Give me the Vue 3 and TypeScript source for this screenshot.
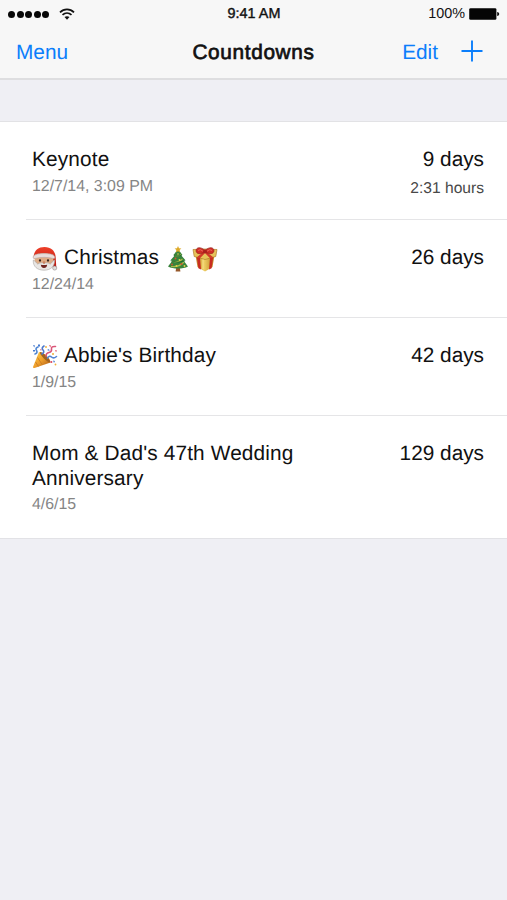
<script setup lang="ts">
type Emoji = 'santa' | 'tree' | 'gift' | 'party'

interface Countdown {
  title: string
  date: string
  days: string
  hours?: string
  before?: Emoji[]
  after?: Emoji[]
}

const countdowns: Countdown[] = [
  { title: 'Keynote', date: '12/7/14, 3:09 PM', days: '9 days', hours: '2:31 hours' },
  { title: 'Christmas', date: '12/24/14', days: '26 days', before: ['santa'], after: ['tree', 'gift'] },
  { title: "Abbie's Birthday", date: '1/9/15', days: '42 days', before: ['party'] },
  { title: "Mom & Dad's 47th Wedding Anniversary", date: '4/6/15', days: '129 days' },
]
</script>

<template>
  <svg class="defs" aria-hidden="true">
    <defs>
      <linearGradient id="g-red" x1="0" y1="0" x2="0" y2="1">
        <stop offset="0" stop-color="#ee402a" /><stop offset="1" stop-color="#b8140c" />
      </linearGradient>
      <linearGradient id="g-gold" x1="0" y1="0" x2="1" y2="0">
        <stop offset="0" stop-color="#b97d1d" /><stop offset=".45" stop-color="#efd065" /><stop offset="1" stop-color="#b97d1d" />
      </linearGradient>
      <linearGradient id="g-cone" x1="0" y1="0" x2="1" y2="1">
        <stop offset="0" stop-color="#ffd24a" /><stop offset=".5" stop-color="#ef9f2c" /><stop offset="1" stop-color="#a35213" />
      </linearGradient>
    </defs>
    <symbol id="santa" viewBox="0 0 26 26">
      <path d="M1.500 12C1.500 5 6 1 12.500 1c7 0 11 4.500 11.200 10.500l.6 10-3.500-1z" fill="url(#g-red)" />
      <ellipse cx="12" cy="15" rx="9.600" ry="8" fill="#dfad87" />
      <path d="M1.300 14c-.5 6.500 4 10.200 10.700 10.200S22.800 20.500 22.600 14c-2 .8-2.600 3-4.300 4.100-2-1.300-4.300-1.700-6.300-.9-2-.8-4.300-.4-6.300.9C4.200 17 3.300 14.800 1.300 14z" fill="#e9e7e5" stroke="#aaa5a1" stroke-width=".6" />
      <path d="M1.200 11.500C1 8.800 5 7.600 12 7.600s11 1.200 10.800 3.900c-.1 1.500-1.400 1.100-2.500.8-4.800-1.300-11.500-1.300-16.600 0-1.200.3-2.400.7-2.500-.8z" fill="#e9dedb" stroke="#bba7a2" stroke-width=".6" />
      <circle cx="8" cy="14.500" r="1.150" fill="#35241c" />
      <circle cx="16" cy="14.500" r="1.150" fill="#35241c" />
      <path d="M8.800 18.700q3.200.7 6.400 0-.5 3.300-3.200 3.300t-3.200-3.300z" fill="#6f2521" />
      <circle cx="12" cy="16.500" r="1.300" fill="#ca825f" />
      <circle cx="22.700" cy="22" r="2.100" fill="#dfdcda" stroke="#827b77" stroke-width=".5" />
    </symbol>
    <symbol id="tree" viewBox="0 0 26 26">
      <path d="M11.300 21h3.400l.7 4.500h-4.800z" fill="#96592b" />
      <path d="M13 3l4.500 6-1.400.3 4.400 5-1.800.5 4.300 5.700c-5 2.700-15 2.700-20 0l4.300-5.700-1.800-.5 4.400-5L8.500 9z" fill="#38833c" />
      <path d="M10 9.500q4 1.500 6-1M7.500 15.300q6 2 10-2.500M6 20.500q8 1 13-4.500" stroke="#a7ba48" stroke-width="1.200" fill="none" />
      <path d="M8.700 9.300q4 1.800 8 0M5.700 14.800q7 3 14.400 0" stroke="#176529" stroke-width=".8" fill="none" />
      <path d="M13 0l1 2.300 2.400.2-1.800 1.600.5 2.400-2.100-1.300-2.100 1.300.5-2.400L9.600 2.500l2.400-.2z" fill="#dda928" />
      <g fill="#ce5631"><circle cx="10.500" cy="12.500" r="1" /><circle cx="16.500" cy="18" r="1.100" /><circle cx="7" cy="18.500" r="1" /></g>
      <g fill="#e3d24b"><circle cx="14.500" cy="14" r=".9" /><circle cx="11.500" cy="20" r="1" /><circle cx="19.500" cy="20" r=".9" /><circle cx="13" cy="8" r=".8" /></g>
    </symbol>
    <symbol id="gift" viewBox="0 0 26 26">
      <path d="M3.500 9l9.500 4 9.500-4-2 12L13 25.500 5.500 21z" fill="url(#g-gold)" />
      <path d="M1 3.500L13 3l12 .5-1.200 7L13 13.500 2.200 10.500z" fill="#e6c35a" stroke="#a66e19" stroke-width=".6" />
      <path d="M4.800 11l3.200 1 1 11.500-2.600-1.300zM18 12l3.200-1-1.600 11.200-2.600 1.300z" fill="#c82c21" />
      <path d="M4.800 11.200L12 5.500l2 .5-6 6.300zM21.200 11.200L14 5.500 12 6l6 6.300z" fill="#d2392a" />
      <path d="M11 13.300v10" stroke="#fff0a1" stroke-width="1" opacity=".7" />
      <path d="M13 6C9 8 5 8.500 4.200 5.500S7-.8 13 4.500c6-5.300 9.600-2 8.800 1S17 8 13 6z" fill="#d12d26" stroke="#941b19" stroke-width=".7" />
      <path d="M6 4.500q2-2 5 .7M20 4.500q-2-2-5 .7" stroke="#ef7463" stroke-width=".8" fill="none" />
      <ellipse cx="13" cy="5.400" rx="2" ry="1.900" fill="#a91f1d" />
    </symbol>
    <symbol id="party" viewBox="0 0 26 26">
      <path d="M7 8C13 9 18 14 18.500 18.500L2.500 24q-2 .5-1.300-1.500z" fill="url(#g-cone)" />
      <path d="M5.500 13.500l5 7.500M3.500 18l3 4.500" stroke="#c87c25" stroke-width=".9" />
      <ellipse cx="13" cy="13.200" rx="1.700" ry="7" transform="rotate(-45 13 13.200)" fill="#a0621f" />
      <g fill="none" stroke-width="1.600" stroke-linecap="round">
        <path d="M10 10q3-2 1-4t1-4" stroke="#4d79cc" />
        <path d="M14 12q0-3 3-3.500t2.500-3.500 4-2.500" stroke="#d95578" />
        <path d="M15.500 14q2-3 4-1t5-.5" stroke="#5484d4" />
        <path d="M3 10q3-1 1.500-3.500T6 3" stroke="#5087d3" />
      </g>
      <g fill="#467ad0"><path d="M1 1l2 .5-.8 2zM6 .5h2v2H6zM1 6h2v1.500H1zM15 6l2-1 .5 2zM21 16.500l2 .5-1 2z" /></g>
      <g fill="#e15368"><path d="M17 1l2 .5-.7 2zM23 6l2 .5-1 1.700zM8 5l1.600.5L9 7zM18.500 17h1.700v2h-1.700z" /></g>
      <g fill="#f0ae36"><circle cx="14" cy="3" r=".9" /><circle cx="21" cy="10" r="1" /><circle cx="23.500" cy="20.500" r=".9" /></g>
    </symbol>
  </svg>

  <main class="screen">
    <header class="header">
      <div class="status">
        <div class="signal">
          <span v-for="n in 5" :key="n" class="dot"></span>
          <svg class="wifi" viewBox="0 0 16 12">
            <g fill="none" stroke="#111" stroke-width="1.700">
              <path d="M1 4.300C5 .3 11 .3 15 4.300" />
              <path d="M3.500 6.900c2.600-2.400 6.400-2.400 9 0" />
            </g>
            <path d="M5.500 9.100c1.400-1.200 3.600-1.200 5 0L8 11.700z" fill="#111" />
          </svg>
        </div>
        <span class="time">9:41 AM</span>
        <div class="power">
          <span class="percent">100%</span>
          <svg class="battery" viewBox="0 0 31 12">
            <rect x=".2" y=".2" width="27.200" height="11.600" rx="1.400" fill="#050505" />
            <path d="M28.200 4c1.400.3 2 1 2 2s-.6 1.700-2 2z" fill="#111" />
          </svg>
        </div>
      </div>
      <nav class="nav">
        <a class="link">Menu</a>
        <h1 class="title">Countdowns</h1>
        <div class="actions">
          <a class="link">Edit</a>
          <svg class="plus" viewBox="0 0 22 22"><path d="M11 .5v21M.5 11h21" stroke="#0b7efb" stroke-width="1.900" /></svg>
        </div>
      </nav>
    </header>

    <ul class="list">
      <li v-for="item in countdowns" :key="item.title" class="row">
        <div class="info">
          <div class="name">
            <svg v-for="e in item.before" :key="e" class="emoji lead"><use :href="'#' + e" /></svg>
            <span>{{ item.title }}</span>
            <span v-if="item.after" class="trail">
              <svg v-for="e in item.after" :key="e" class="emoji"><use :href="'#' + e" /></svg>
            </span>
          </div>
          <div class="date">{{ item.date }}</div>
        </div>
        <div class="remaining">
          <div class="days">{{ item.days }}</div>
          <div v-if="item.hours" class="hours">{{ item.hours }}</div>
        </div>
      </li>
    </ul>
  </main>
</template>

<style>
body { background: #efeff4; }
</style>

<style scoped>
.defs { position: absolute; width: 0; height: 0; }
.screen {
  min-height: 900px;
  background: #efeff4;
  color: #111;
  font-family: "Liberation Sans", Arial, sans-serif;
  text-rendering: geometricPrecision;
}
.header {
  box-sizing: border-box;
  height: 80px;
  background: #f7f7f7;
  border-bottom: 2px solid #dedee0;
}
.status {
  display: grid;
  grid-template-columns: 1fr auto 1fr;
  align-items: center;
  height: 27px;
  padding: 0 7px 0 8px;
  font-size: 14.400px;
  line-height: 27px;
}
.signal { display: flex; align-items: center; gap: 1.600px; }
.dot { width: 7px; height: 7px; border-radius: 50%; background: #080808; }
.wifi { width: 16px; height: 12px; margin-left: 8px; }
.time { padding-top: 1px; -webkit-text-stroke: .4px #111; }
.power { display: flex; justify-content: flex-end; align-items: center; gap: 4px; }
.percent { padding-top: 1px; }
.battery { width: 31px; height: 12px; }
.nav {
  display: grid;
  grid-template-columns: 1fr auto 1fr;
  align-items: center;
  height: 51px;
  padding: 0 24px 0 16px;
  font-size: 20.800px;
}
.link { padding-top: 1px; color: #0b7efb; }
.title {
  margin: 0 -4px 0 4px;
  padding-top: 1px;
  font-size: 20.800px;
  font-weight: 400;
  letter-spacing: .65px;
  -webkit-text-stroke: .7px #111;
}
.actions { display: flex; justify-content: flex-end; align-items: center; gap: 23px; }
.plus { width: 22px; height: 22px; margin-bottom: 3px; }
.list {
  margin: 41px 0 0;
  padding: 0;
  list-style: none;
  background: #fff;
  border-top: 1px solid #e2e2e5;
  border-bottom: 1px solid #e2e2e6;
}
.row {
  display: flex;
  justify-content: space-between;
  box-sizing: border-box;
  min-height: 98px;
  margin-left: 26px;
  padding: 26px 23px 20px 6px;
  border-bottom: 1px solid #e5e5e7;
}
.row:last-child { padding-bottom: 24px; border-bottom: 0; }
.info { width: 290px; }
.name, .days { font-size: 20.800px; line-height: 24.500px; letter-spacing: .15px; }
.days { text-align: right; letter-spacing: 0; }
.emoji { width: 26px; height: 26px; vertical-align: top; }
.lead { margin: 0 6px 0 0; }
.trail { display: inline-flex; gap: 1px; margin-left: 6px; vertical-align: top; }
.name { margin-bottom: 4px; }
.name:has(.emoji) { height: 24.500px; white-space: nowrap; }
.date { font-size: 15.900px; line-height: 19px; color: #858585; }
.hours { margin-top: 6px; font-size: 15.600px; line-height: 19px; color: #484848; text-align: right; }
</style>
